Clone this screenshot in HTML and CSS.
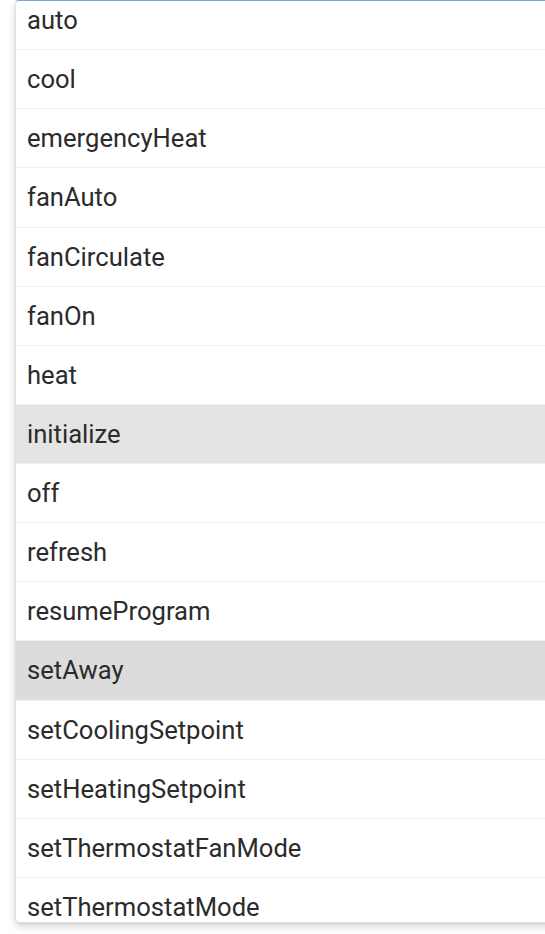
FILE: index.html
```html
<!DOCTYPE html>
<html>
<head>
<meta charset="utf-8">
<link rel="stylesheet" href="styles.css">
</head>
<body>
<div class="menu">
  <ul class="list">
    <li class="item">auto</li>
    <li class="item">cool</li>
    <li class="item">emergencyHeat</li>
    <li class="item">fanAuto</li>
    <li class="item">fanCirculate</li>
    <li class="item">fanOn</li>
    <li class="item">heat</li>
    <li class="item hover">initialize</li>
    <li class="item">off</li>
    <li class="item">refresh</li>
    <li class="item">resumeProgram</li>
    <li class="item selected">setAway</li>
    <li class="item">setCoolingSetpoint</li>
    <li class="item">setHeatingSetpoint</li>
    <li class="item">setThermostatFanMode</li>
    <li class="item">setThermostatMode</li>
  </ul>
</div>
</body>
</html>
```
FILE: styles.css
```css
html, body {
  margin: 0;
  padding: 0;
  background: #ffffff;
}
body {
  height: 934px;
  overflow: hidden;
  font-family: Roboto, "Liberation Sans", Arial, sans-serif;
}
.menu {
  margin-left: 15px;
  width: 560px;
  height: 923px;
  box-sizing: border-box;
  border-top: 1px solid #7fa1da;
  border-left: 1px solid #e3e3e3;
  border-bottom: 1px solid #e3e3e3;
  border-radius: 4px 0 0 5px;
  overflow: hidden;
  background: #ffffff;
  box-shadow: 0 4px 8px rgba(0, 0, 0, 0.14), 0 1px 3px rgba(0, 0, 0, 0.08);
}
.list {
  list-style: none;
  margin: -10px 0 0 0;
  padding: 0;
}
.item {
  height: 58.14px;
  border-bottom: 1px solid #f0f0f0;
  display: flex;
  align-items: center;
  padding-left: 11px;
  font-size: 25.6px;
  color: #2b2b2b;
  letter-spacing: 0;
}
.item.hover {
  background: #e4e4e4;
}
.item.selected {
  background: #dcdcdc;
}
```
